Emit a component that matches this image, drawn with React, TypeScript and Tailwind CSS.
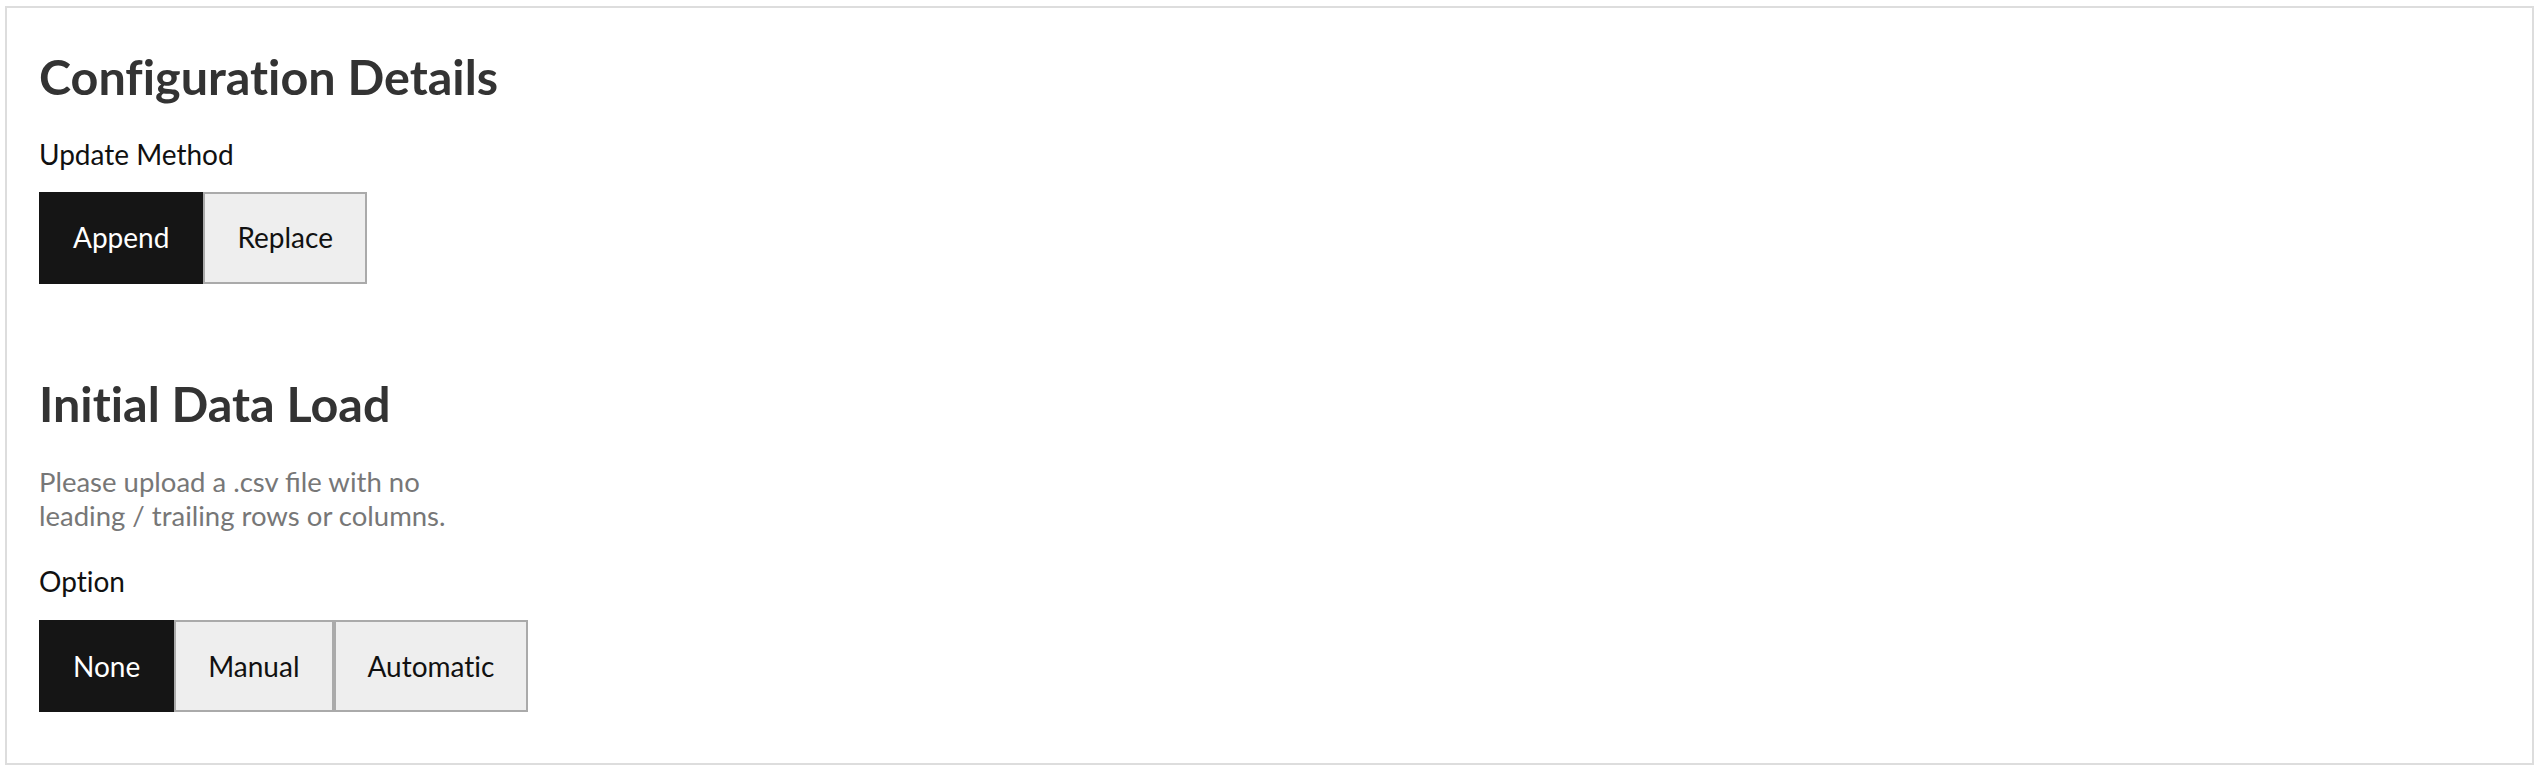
const updateMethods = ['Append', 'Replace'];
const loadOptions = ['None', 'Manual', 'Automatic'];

type ToggleProps = {
  options: string[];
  active: string;
};

const ToggleGroup = ({ options, active }: ToggleProps) => {
  return (
    <div className="flex">
      {options.map((opt) => (
        <button
          key={opt}
          className={
            opt === active
              ? 'h-[92px] px-8 border-2 border-[#151515] bg-[#151515] text-white text-[28px] leading-[1.2]'
              : 'h-[92px] px-8 border-2 border-[#aaaaaa] bg-[#eeeeee] text-[#111111] text-[28px] leading-[1.2]'
          }
        >
          {opt}
        </button>
      ))}
    </div>
  );
};

export default function App() {
  return (
    <div className="bg-white w-[2548px] h-[774px] pt-[6px] pl-[5px] font-['Lato','Liberation_Sans',sans-serif] [font-variant-ligatures:none]">
      <div className="w-[2529px] h-[759px] border-2 border-[#dddddd] px-8 pt-[40px]">
        {/* Configuration */}
        <h1 className="text-[48.5px] leading-[57.6px] font-bold text-[#333333]">Configuration Details</h1>
        <p className="mt-8 text-[28px] leading-[1.2] text-[#111111]">Update Method</p>
        <div className="mt-[21px]">
          <ToggleGroup options={updateMethods} active="Append" />
        </div>

        {/* Initial load */}
        <h2 className="mt-[91px] text-[48.5px] leading-[57.6px] font-bold text-[#333333]">Initial Data Load</h2>
        <p className="mt-8 max-w-[440px] text-[27.5px] leading-[34px] text-[#777777] [font-variant-ligatures:normal]">
          Please upload a .csv file with no leading / trailing rows or columns.
        </p>
        <p className="mt-8 text-[28px] leading-[1.2] text-[#111111]">Option</p>
        <div className="mt-[22px]">
          <ToggleGroup options={loadOptions} active="None" />
        </div>
      </div>
    </div>
  );
}
